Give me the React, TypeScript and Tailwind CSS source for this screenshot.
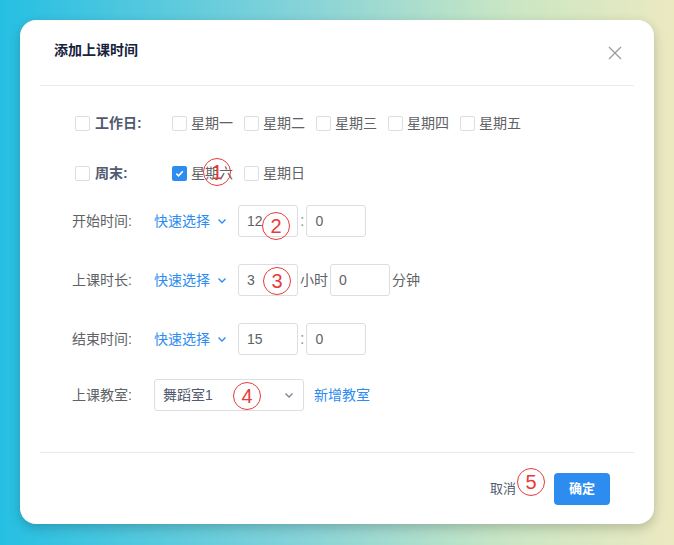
import React from "react";

const Box = ({ checked }: { checked?: boolean }) =>
  checked ? (
    <span className="w-[15px] h-[15px] rounded-[2px] bg-[#2d8cf0] flex items-center justify-center">
      <svg width="11" height="11" viewBox="0 0 12 12"><path d="M2.5 6.2 5 8.6 9.6 3.6" stroke="#fff" strokeWidth="1.8" fill="none" /></svg>
    </span>
  ) : (
    <span className="w-[15px] h-[15px] rounded-[2px] border border-[#dcdee2] bg-white" />
  );

const Chk = ({ label, checked }: { label: string; checked?: boolean }) => (
  <div className="flex items-center gap-[4px] mr-[11px]">
    <Box checked={checked} />
    <span className="text-[14px] text-[#606266]">{label}</span>
  </div>
);

const Chev = ({ c = "#2d8cf0" }: { c?: string }) => (
  <svg width="12" height="12" viewBox="0 0 12 12"><path d="M2.5 4.5 6 8l3.5-3.5" stroke={c} strokeWidth="1.4" fill="none" /></svg>
);

const Input = ({ v }: { v: string }) => (
  <div className="w-[60px] h-[32px] border border-[#dcdee2] rounded-[3px] flex items-center px-[8px] text-[14px] text-[#606266]">{v}</div>
);

const Quick = () => (
  <div className="flex items-center gap-[6px] text-[14px] text-[#2d8cf0] w-[84px]">快速选择<Chev /></div>
);

const Circle = ({ n, x, y }: { n: string; x: number; y: number }) => (
  <div className="absolute w-[28px] h-[28px] rounded-full border-[1.5px] border-[#e83a3a] text-[#e83a3a] flex items-center justify-center text-[20px] leading-none" style={{ left: x, top: y }}>{n}</div>
);

const Row = ({ label, children, h = 50 }: { label: string; children: React.ReactNode; h?: number }) => (
  <div className="flex items-center" style={{ height: h }}>
    <div className="w-[82px] text-[14px] text-[#606266]">{label}</div>
    {children}
  </div>
);

export default function App() {
  return (
    <div className="w-[674px] h-[545px] bg-[linear-gradient(90deg,#25bfe3_0%,#86d3d8_45%,#c9e6c4_75%,#ebe9c0_100%)] p-[20px] relative" style={{ fontFamily: '"Liberation Sans","Noto Sans CJK SC",sans-serif' }}>
      <div className="w-[634px] h-[504px] bg-white rounded-[16px] shadow-[0_4px_12px_rgba(0,0,0,0.2)] px-[20px] flex flex-col">
        <div className="h-[66px] flex items-center justify-between border-b border-[#e8eaec] pl-[14px] pr-[0px]">
          <span className="text-[14px] font-bold text-[#17233d] mt-[-4px]">添加上课时间</span>
          <svg width="14" height="14" viewBox="0 0 14 14" className="mr-[12px]"><path d="M1 1l12 12M13 1 1 13" stroke="#999" strokeWidth="1.2" /></svg>
        </div>
        <div className="pl-[35px] pt-[12px] flex flex-col flex-1">
          <div className="flex items-center h-[50px]">
            <div className="w-[97px] flex items-center gap-[5px]"><Box /><span className="text-[14px] font-bold text-[#515a6e]">工作日:</span></div>
            <Chk label="星期一" /><Chk label="星期二" /><Chk label="星期三" /><Chk label="星期四" /><Chk label="星期五" />
          </div>
          <div className="flex items-center h-[50px]">
            <div className="w-[97px] flex items-center gap-[5px]"><Box /><span className="text-[14px] font-bold text-[#515a6e]">周末:</span></div>
            <Chk label="星期六" checked /><Chk label="星期日" />
          </div>
          <div className="-ml-[3px]">
            <Row label="开始时间:" h={46}><Quick /><Input v="12" /><span className="mx-[2px] text-[#999]">:</span><Input v="0" /></Row>
            <Row label="上课时长:" h={72}><Quick /><Input v="3" /><span className="text-[14px] text-[#606266] mx-[2px]">小时</span><Input v="0" /><span className="text-[14px] text-[#606266] ml-[2px]">分钟</span></Row>
            <Row label="结束时间:" h={46}><Quick /><Input v="15" /><span className="mx-[2px] text-[#999]">:</span><Input v="0" /></Row>
            <Row label="上课教室:" h={66}>
              <div className="w-[150px] h-[32px] border border-[#dcdee2] rounded-[3px] flex items-center justify-between px-[8px] text-[14px] text-[#515a6e]">舞蹈室1<Chev c="#808695" /></div>
              <span className="ml-[10px] text-[14px] text-[#2d8cf0]">新增教室</span>
            </Row>
          </div>
        </div>
        <div className="h-[72px] border-t border-[#e8eaec] flex items-center justify-end pr-[24px]">
          <span className="text-[13px] text-[#515a6e] mr-[38px]">取消</span>
          <div className="w-[56px] h-[32px] rounded-[4px] bg-[#2d8cf0] text-white text-[13px] font-bold flex items-center justify-center">确定</div>
        </div>
      </div>
      <Circle n="1" x={203} y={158} />
      <Circle n="2" x={262} y={212} />
      <Circle n="3" x={263} y={267} />
      <Circle n="4" x={233} y={382} />
      <Circle n="5" x={517} y={468} />
    </div>
  );
}
